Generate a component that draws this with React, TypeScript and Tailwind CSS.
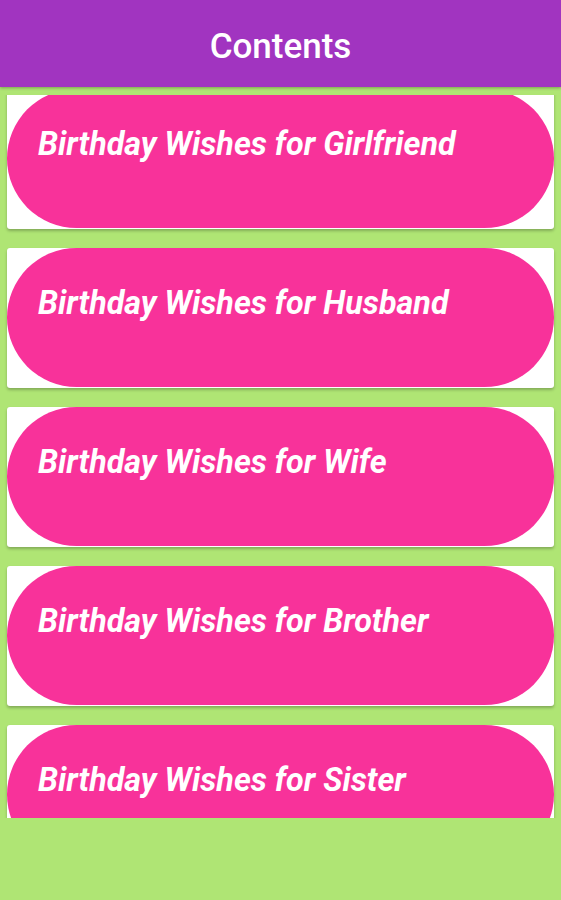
import React from "react";

const items = [
  "Birthday Wishes for Girlfriend",
  "Birthday Wishes for Husband",
  "Birthday Wishes for Wife",
  "Birthday Wishes for Brother",
  "Birthday Wishes for Sister",
];

export default function App() {
  return (
    <div
      className="w-[561px] h-[900px] bg-[#afe574] overflow-hidden flex flex-col"
      style={{ fontFamily: "Roboto, 'Noto Sans', sans-serif" }}
    >
      <div className="h-[87px] shrink-0 bg-[#a134c0] flex items-center justify-center shadow-[0_1px_3px_rgba(0,0,0,0.3)] relative z-10">
        <span className="text-white text-[35px] font-medium leading-none pt-[5px]">Contents</span>
      </div>
      <div className="pt-[8px] shrink-0">
        <div className="h-[723px] overflow-hidden">
          <div className="-mt-[6px] flex flex-col gap-[19px] px-[7px]">
            {items.map((t) => (
              <div
                key={t}
                className="h-[140px] bg-white rounded-[3px] shadow-[0_2px_3px_rgba(0,0,0,0.25)] shrink-0"
              >
                <div className="h-[139px] rounded-full bg-[#f8329a] pl-[31px] pt-[36px]">
                  <span className="text-white text-[32.3px] font-bold italic leading-[38px] whitespace-nowrap">
                    {t}
                  </span>
                </div>
              </div>
            ))}
          </div>
        </div>
      </div>
    </div>
  );
}
